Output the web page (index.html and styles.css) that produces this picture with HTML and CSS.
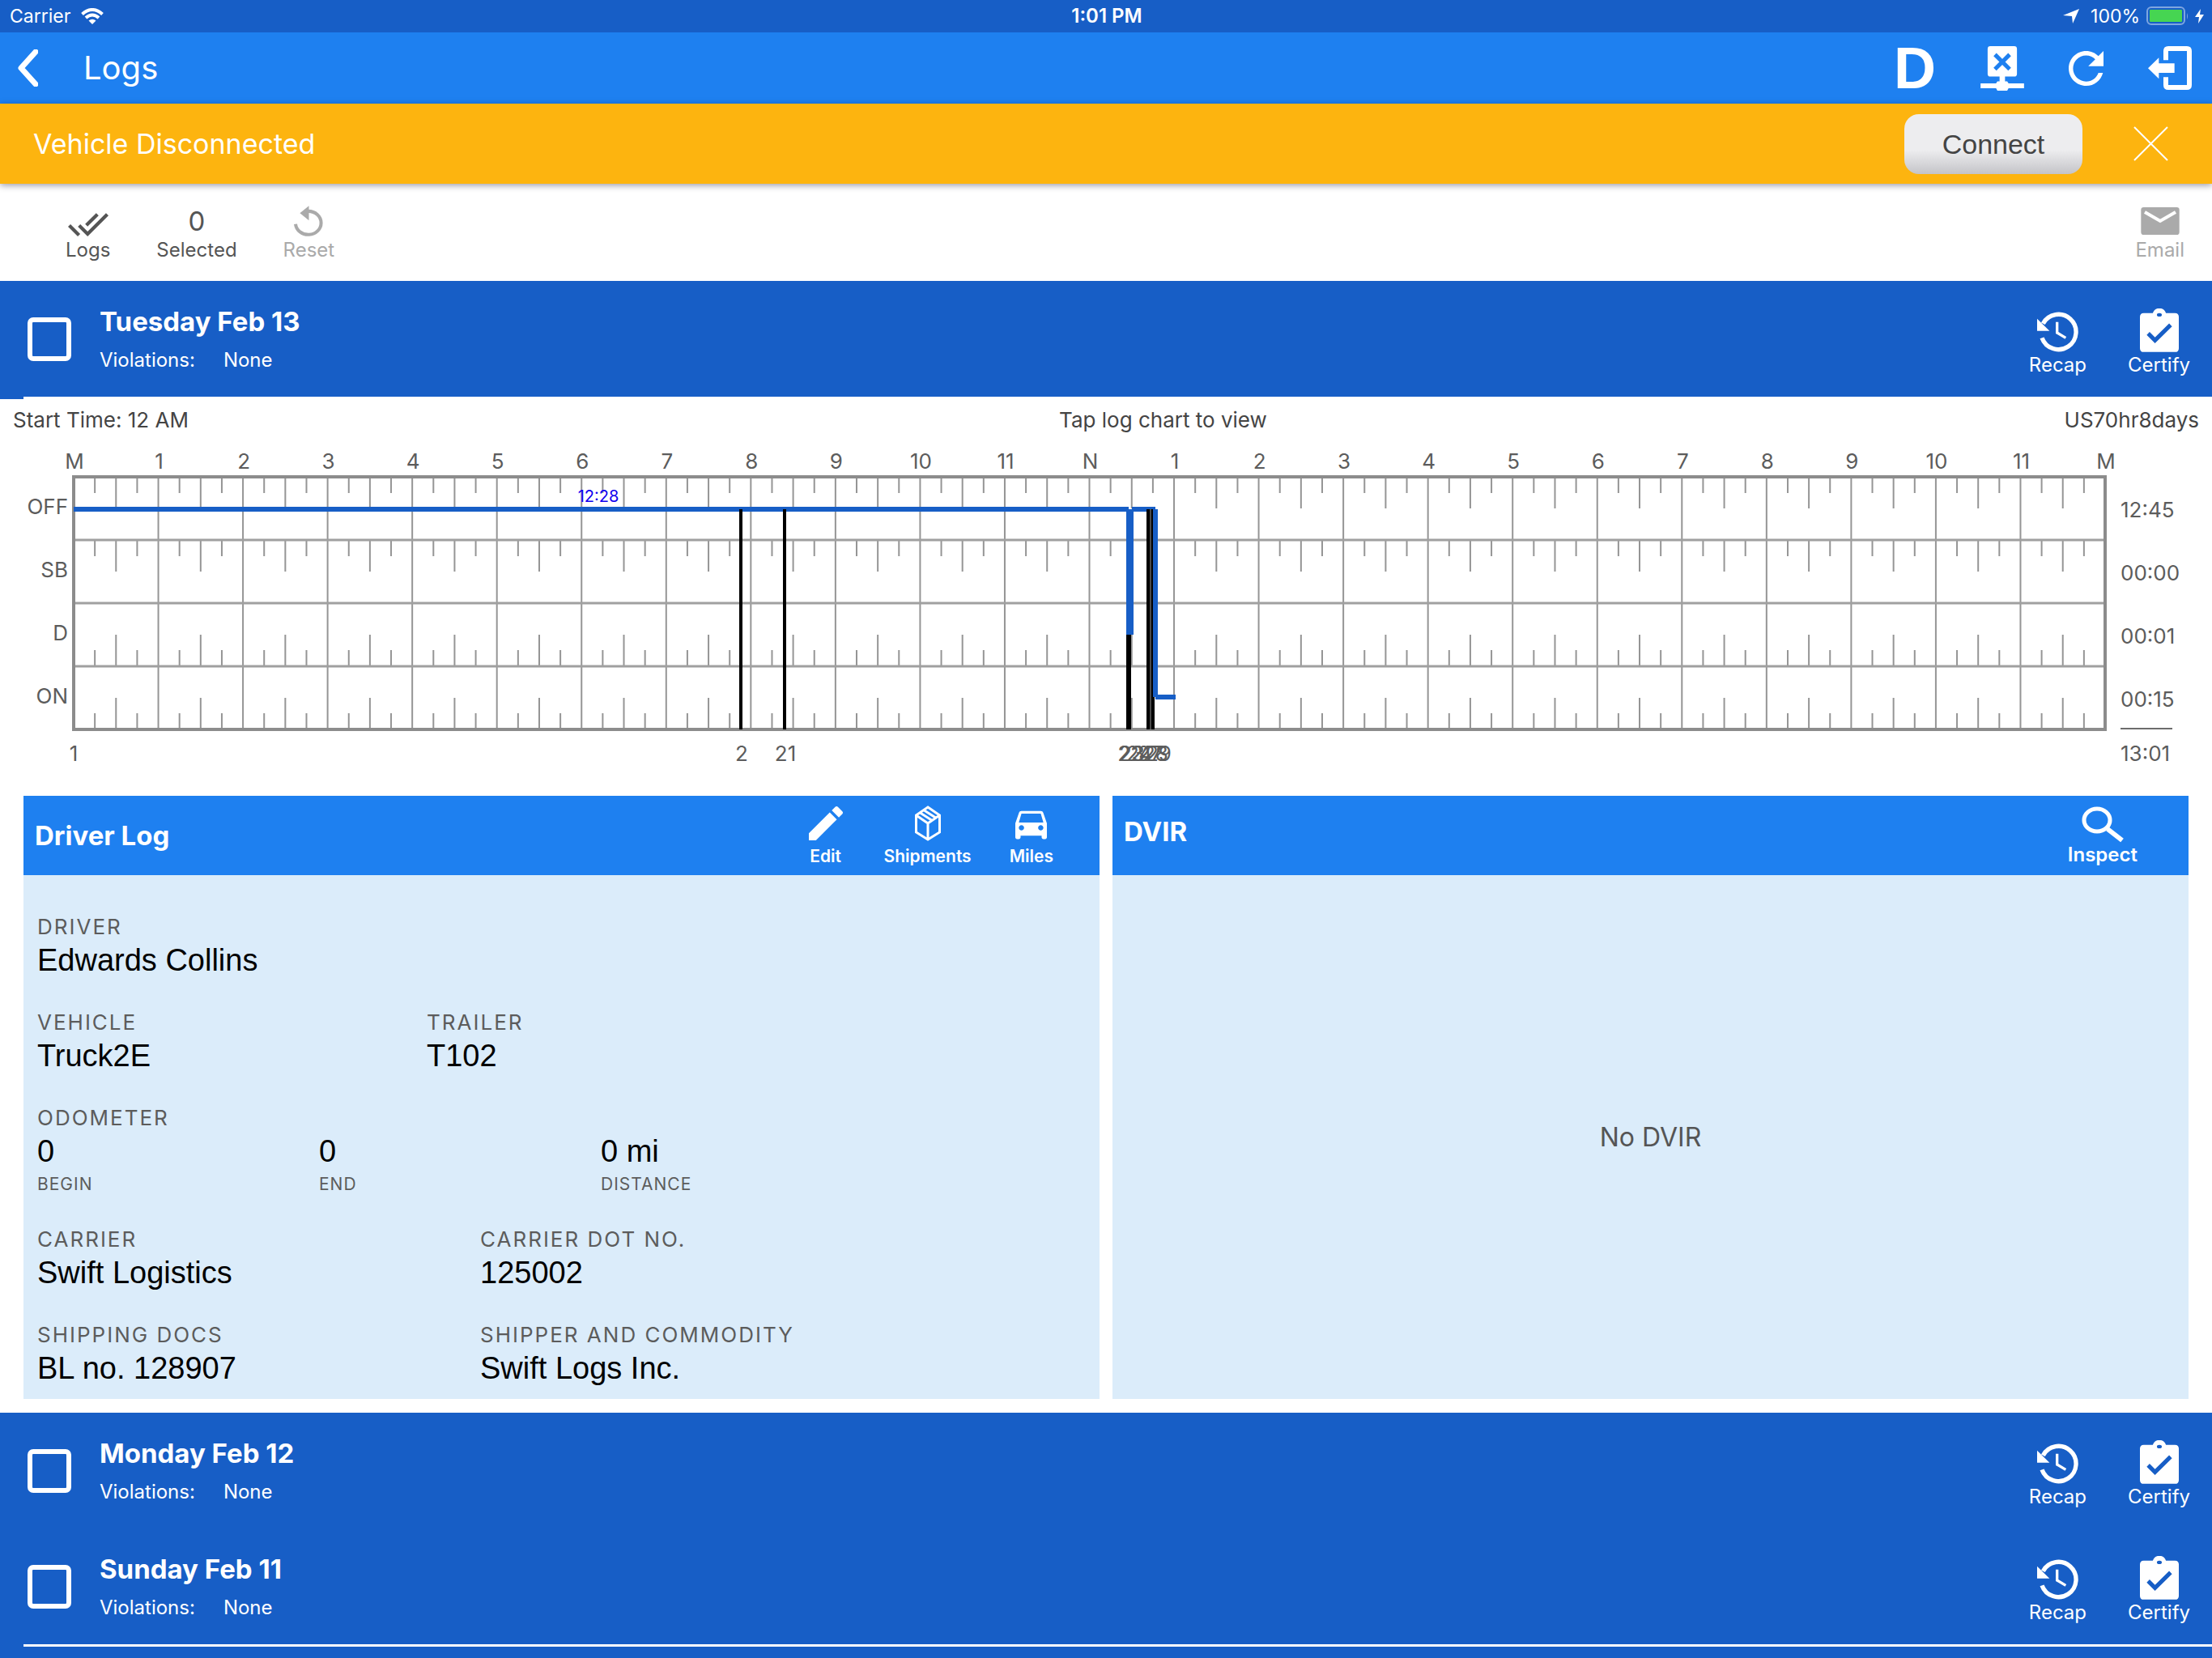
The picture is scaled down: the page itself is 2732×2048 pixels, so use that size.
FILE: index.html
```html
<!DOCTYPE html>
<html lang="en">
<head>
    <meta charset="utf-8">
    <meta name="viewport" content="width=device-width, initial-scale=1">
    <title>Logs</title>
    <link rel="stylesheet" href="styles.css">
</head>
<body>
    <!-- Shared icons -->
    <svg class="sprite" aria-hidden="true">
        <symbol id="icon-recap" viewBox="0 0 153 146">
            <path d="M22 42A65 65 0 1 1 18 95" fill="none" stroke="currentColor" stroke-width="16"/>
            <path d="M0 24L46 69H0z" fill="currentColor"/>
            <path d="M74 36V76L106 95" fill="none" stroke="currentColor" stroke-width="10"/>
        </symbol>
        <symbol id="icon-certify" viewBox="0 0 142 159">
            <path d="M14 17H47A25 25 0 0 1 95 17H128Q142 17 142 31V145Q142 159 128 159H14Q0 159 0 145V31Q0 17 14 17z" fill="currentColor"/>
            <ellipse cx="71" cy="23" rx="9" ry="6" fill="#175ec6"/>
            <path d="M30 91L55 116L112 60" fill="none" stroke="#175ec6" stroke-width="15"/>
        </symbol>
    </svg>

    <div class="status-bar">
        <div class="status-left">
            <span>Carrier</span>
            <svg width="28" height="20" viewBox="0 0 28 20" fill="none" stroke="#fff" stroke-width="4">
                <path d="M1.500 7.500Q14-3.500 26.500 7.500"/>
                <path d="M6 12Q14 5 22 12"/>
                <path d="M14 20L9.500 15.500Q14 12 18.500 15.500z" fill="#fff" stroke="none"/>
            </svg>
        </div>
        <strong class="status-time">1:01 PM</strong>
        <div class="status-right">
            <svg width="20" height="18" viewBox="0 0 20 18"><path d="M20 0L12 18L11 9L0 8z" fill="#fff"/></svg>
            <span class="battery-text">100%</span>
            <svg width="52" height="24" viewBox="0 0 52 24">
                <rect x="1" y="1" width="46" height="21" rx="5" fill="none" stroke="#7ea6e0" stroke-width="2"/>
                <rect x="4" y="4" width="40" height="15" rx="1" fill="#46d552"/>
                <path d="M50 8Q52 12 50 16z" fill="#7ea6e0"/>
            </svg>
            <svg width="11" height="18" viewBox="0 0 11 18"><path d="M7 0L0 10H5L4 18L11 7H6z" fill="#fff"/></svg>
        </div>
    </div>

    <header class="nav-bar">
        <button class="icon-button" type="button" aria-label="Back">
            <svg width="26" height="46" viewBox="0 0 26 46"><path d="M23 3L5 23L23 43" fill="none" stroke="#fff" stroke-width="7" stroke-linecap="round" stroke-linejoin="round"/></svg>
        </button>
        <h1>Logs</h1>
        <div class="nav-actions">
            <button class="icon-button duty-button" type="button" aria-label="Duty status D">D</button>
            <button class="icon-button" type="button" aria-label="Device disconnected">
                <svg width="54" height="55" viewBox="0 0 160 164">
                    <path d="M36 0H124Q134 0 134 10V102Q134 112 124 112H90V130H98L103 137H160V155H103L98 164H62L57 155H0V137H57L62 130H70V112H36Q26 112 26 102V10Q26 0 36 0z" fill="#fff"/>
                    <path d="M53 31L107 85M107 31L53 85" stroke="#1e80f0" stroke-width="15"/>
                </svg>
            </button>
            <button class="icon-button" type="button" aria-label="Refresh">
                <svg width="43" height="43" viewBox="4 4 16 16"><path d="M17.650 6.350C16.200 4.900 14.210 4 12 4c-4.420 0-7.990 3.580-7.990 8s3.570 8 7.990 8c3.730 0 6.840-2.550 7.730-6h-2.080c-.82 2.330-3.040 4-5.650 4-3.310 0-6-2.690-6-6s2.690-6 6-6c1.660 0 3.140.69 4.220 1.780L13 11h7V4l-2.350 2.350z" fill="#fff"/></svg>
            </button>
            <button class="icon-button" type="button" aria-label="Log out">
                <svg width="54" height="54" viewBox="0 0 162 162">
                    <path d="M66 52V18Q66 9 75 9H144Q153 9 153 18V144Q153 153 144 153H75Q66 153 66 144V115" fill="none" stroke="#fff" stroke-width="18"/>
                    <path d="M0 82L40 43V64H98V99H40V121z" fill="#fff"/>
                </svg>
            </button>
        </div>
    </header>

    <div class="banner">
        <span class="banner-text">Vehicle Disconnected</span>
        <button class="connect-button" type="button">Connect</button>
        <button class="icon-button" type="button" aria-label="Dismiss">
            <svg width="43" height="43" viewBox="0 0 43 43"><path d="M1 1L42 42M42 1L1 42" stroke="#fff" stroke-width="2"/></svg>
        </button>
    </div>

    <div class="toolbar">
        <button class="tool" type="button">
            <span class="tool-icon"><svg width="50" height="37" viewBox="0.410 1.800 23.250 17.200"><path d="M18 7l-1.410-1.410-6.340 6.340 1.410 1.410L18 7zm4.240-1.410L11.660 16.170 7.480 12l-1.410 1.410L11.660 19l12-12-1.420-1.410zM.41 13.410L6 19l1.410-1.410L1.830 12 .41 13.410z" fill="#555"/></svg></span>
            Logs
        </button>
        <div class="tool">
            <span class="tool-icon">0</span>
            Selected
        </div>
        <button class="tool" type="button" disabled>
            <span class="tool-icon"><svg width="36" height="38" viewBox="0 0 107 112">
                <path d="M53 20A47 43 0 1 1 6 67" fill="none" stroke="#aaa" stroke-width="12"/>
                <path d="M55 0V54L22 27z" fill="#aaa"/>
            </svg></span>
            Reset
        </button>
        <button class="tool tool-email" type="button" disabled>
            <span class="tool-icon"><svg width="48" height="34" viewBox="0 0 142 102">
                <rect width="142" height="102" rx="10" fill="#aaa"/>
                <path d="M14 18L71 51L128 18" fill="none" stroke="#fff" stroke-width="12"/>
            </svg></span>
            Email
        </button>
    </div>

    <section class="log-day">
        <input class="log-check" type="checkbox" id="day-13">
        <label class="log-label" for="day-13">
            <span class="log-date">Tuesday Feb 13</span>
            <span class="log-violations"><span>Violations:</span><span>None</span></span>
        </label>
        <button class="log-action" type="button"><svg width="51" height="50"><use href="#icon-recap"/></svg>Recap</button>
        <button class="log-action" type="button"><svg width="48" height="54"><use href="#icon-certify"/></svg>Certify</button>
    </section>
    <div class="divider"></div>

    <main class="log-detail">
        <div class="chart-info">
            <span>Start Time: 12 AM</span>
            <span>Tap log chart to view</span>
            <span>US70hr8days</span>
        </div>
        <svg id="chart" class="chart" viewBox="0 0 2732 438" role="img" aria-label="Duty status chart"></svg>

        <div class="cards">
            <section class="card">
                <header class="card-header">
                    <h2>Driver Log</h2>
                    <button class="card-action" type="button">
                        <svg width="42" height="44" viewBox="3 3 18 18"><path d="M3 17.250V21h3.750L17.810 9.940l-3.750-3.750L3 17.250zM20.710 7.040c.39-.39.39-1.020 0-1.410l-2.340-2.340c-.39-.39-1.020-.39-1.410 0l-1.830 1.830 3.750 3.750 1.830-1.830z" fill="#fff"/></svg>
                        Edit
                    </button>
                    <button class="card-action" type="button">
                        <svg width="34" height="44" viewBox="0 0 33 44" fill="none" stroke="#fff" stroke-width="3">
                            <path d="M16.500 2L31 12V33L16.500 42L2 33V12zM2 12L16.500 22L31 12M16.500 22V42"/>
                            <path d="M7 9L21 18M12 6L26 15"/>
                        </svg>
                        Shipments
                    </button>
                    <button class="card-action" type="button">
                        <svg width="39" height="44" viewBox="3 2 18 18"><path d="M18.920 5.010C18.720 4.420 18.160 4 17.500 4h-11c-.66 0-1.210.42-1.420 1.010L3 11v8c0 .55.45 1 1 1h1c.55 0 1-.45 1-1v-1h12v1c0 .55.45 1 1 1h1c.55 0 1-.45 1-1v-8l-2.080-5.990zM6.500 15c-.83 0-1.500-.67-1.500-1.500S5.670 12 6.500 12s1.500.67 1.500 1.500S7.330 15 6.500 15zm11 0c-.83 0-1.500-.67-1.500-1.500s.67-1.500 1.500-1.500 1.500.67 1.500 1.500-.67 1.500-1.500 1.500zM5 10.500l1.500-5h11l1.500 5H5z" fill="#fff"/></svg>
                        Miles
                    </button>
                </header>
                <div class="card-body">
                    <dl class="fields">
                        <div><dt>DRIVER</dt><dd>Edwards Collins</dd></div>
                    </dl>
                    <dl class="fields fields-vehicle">
                        <div><dt>VEHICLE</dt><dd>Truck2E</dd></div>
                        <div><dt>TRAILER</dt><dd>T102</dd></div>
                    </dl>
                    <div>
                        <h3>ODOMETER</h3>
                        <dl class="fields fields-odometer">
                            <div><dt>BEGIN</dt><dd>0</dd></div>
                            <div><dt>END</dt><dd>0</dd></div>
                            <div><dt>DISTANCE</dt><dd>0 mi</dd></div>
                        </dl>
                    </div>
                    <dl class="fields fields-carrier">
                        <div><dt>CARRIER</dt><dd>Swift Logistics</dd></div>
                        <div><dt>CARRIER DOT NO.</dt><dd>125002</dd></div>
                    </dl>
                    <dl class="fields fields-carrier">
                        <div><dt>SHIPPING DOCS</dt><dd>BL no. 128907</dd></div>
                        <div><dt>SHIPPER AND COMMODITY</dt><dd>Swift Logs Inc.</dd></div>
                    </dl>
                </div>
            </section>

            <section class="card">
                <header class="card-header card-header-dvir">
                    <h2>DVIR</h2>
                    <button class="card-action inspect-button" type="button">
                        <svg width="52" height="45" viewBox="0 0 52 45" fill="none" stroke="#fff">
                            <ellipse cx="19" cy="17" rx="16" ry="14" stroke-width="5"/>
                            <path d="M32 28L50 42" stroke-width="6"/>
                        </svg>
                        Inspect
                    </button>
                </header>
                <p class="card-empty">No DVIR</p>
            </section>
        </div>
    </main>

    <section class="log-day">
        <input class="log-check" type="checkbox" id="day-12">
        <label class="log-label" for="day-12">
            <span class="log-date">Monday Feb 12</span>
            <span class="log-violations"><span>Violations:</span><span>None</span></span>
        </label>
        <button class="log-action" type="button"><svg width="51" height="50"><use href="#icon-recap"/></svg>Recap</button>
        <button class="log-action" type="button"><svg width="48" height="54"><use href="#icon-certify"/></svg>Certify</button>
    </section>

    <section class="log-day">
        <input class="log-check" type="checkbox" id="day-11">
        <label class="log-label" for="day-11">
            <span class="log-date">Sunday Feb 11</span>
            <span class="log-violations"><span>Violations:</span><span>None</span></span>
        </label>
        <button class="log-action" type="button"><svg width="51" height="50"><use href="#icon-recap"/></svg>Recap</button>
        <button class="log-action" type="button"><svg width="48" height="54"><use href="#icon-certify"/></svg>Certify</button>
    </section>
    <div class="divider"></div>

    <script src="chart.js"></script>
</body>
</html>
```
FILE: styles.css
```css
* { box-sizing: border-box; }
body { margin: 0; min-height: 100vh; font-family: Inter, "Liberation Sans", sans-serif; font-size: 24px; line-height: 28px; color: #fff; background: #175ec6; }
h1, h2, h3, p, dl, dd { margin: 0; }
button { margin: 0; padding: 0; border: none; background: none; color: inherit; font: inherit; cursor: pointer; }
button:disabled { cursor: default; }
svg { display: block; }
.sprite { position: absolute; width: 0; height: 0; }

/* Status bar */
.status-bar { display: grid; grid-template-columns: 1fr auto 1fr; align-items: center; height: 40px; padding: 0 10px 0 12px; font-size: 23px; }
.status-left { display: flex; align-items: center; gap: 13px; }
.status-time { font-size: 24px; font-weight: 600; }
.status-right { display: flex; align-items: center; justify-content: flex-end; gap: 8px; }
.battery-text { padding-left: 6px; }

/* Navigation */
.nav-bar { display: flex; align-items: center; height: 88px; padding: 0 25px 0 21px; background: #1e80f0; }
.nav-bar h1 { margin-left: 56px; font-size: 40px; line-height: 48px; font-weight: 400; }
.nav-actions { display: flex; align-items: center; gap: 55px; margin-left: auto; }
.icon-button { display: flex; align-items: center; justify-content: center; }
.duty-button { font-family: "Liberation Sans", Arial, sans-serif; font-size: 72px; line-height: 72px; font-weight: 700; }

/* Disconnected banner */
.banner { position: relative; display: flex; align-items: center; height: 99px; padding: 0 54px 0 41px; background: #fdb40f; box-shadow: 0 2px 8px rgba(0, 0, 40, 0.4); }
.banner-text { flex: 1; font-size: 34px; line-height: 44px; }
.connect-button { width: 220px; height: 74px; margin-right: 63px; border-radius: 18px; background: linear-gradient(#ededef 60%, #c4c4c8); color: #444; font-family: "Liberation Sans", Arial, sans-serif; font-size: 34px; }

/* Toolbar */
.toolbar { display: flex; gap: 57px; height: 120px; padding: 24px 34px 0 81px; background: #fff; }
.tool { display: flex; flex-direction: column; align-items: center; color: #555; }
.tool:disabled { color: #aaa; }
.tool-icon { display: flex; align-items: center; justify-content: center; height: 44px; font-size: 33px; }
.tool-email { margin-left: auto; }

/* Day rows */
.log-day { display: flex; align-items: center; height: 143px; padding: 0 27px 0 34px; background: #175ec6; }
.log-check { appearance: none; width: 54px; height: 54px; margin: 0; border: 6px solid #fff; border-radius: 7px; }
.log-check:checked { background: #fff; }
.log-label { flex: 1; margin-left: 35px; }
.log-date { display: block; margin-bottom: 15px; font-size: 33px; line-height: 38px; font-weight: 700; }
.log-violations { display: flex; gap: 35px; }
.log-action { display: flex; flex-direction: column; align-items: center; justify-content: flex-end; gap: 2px; height: 84px; margin: 8px 0 0 51px; }
.divider { height: 3px; border-left: 29px solid #175ec6; background: #fff; }

/* Chart */
.log-detail { padding-bottom: 17px; background: #fff; }
.chart-info { display: grid; grid-template-columns: 51fr 49fr auto; padding: 9px 16px; color: #444; font-size: 26px; line-height: 34px; }
.chart { width: 100%; cursor: pointer; }
.chart text { fill: #5c5c5c; font-size: 26px; text-anchor: middle; }
.chart .status-label { text-anchor: end; }
.chart .total { text-anchor: start; }
.chart .duration { fill: #1000ee; font-size: 20px; }
.chart .tick, .chart .hour { stroke: #959595; stroke-width: 2; }
.chart .row { stroke: #a0a0a0; stroke-width: 3; }
.chart .frame { fill: none; stroke: #8c8c8c; stroke-width: 4; }
.chart .event { stroke: #000; stroke-width: 4; }
.chart .event-gap { stroke: #4a4a4a; stroke-width: 6; }
.chart .duty { fill: none; stroke: #175ec6; stroke-width: 6; }
.chart .sum { stroke: #6c6c6c; stroke-width: 2; }

/* Cards */
.cards { display: grid; grid-template-columns: 1fr 1fr; gap: 16px; padding: 0 29px; }
.card { display: flex; flex-direction: column; background: #dbecfa; }
.card-header { display: flex; align-items: center; gap: 47px; height: 98px; padding: 0 57px 0 14px; background: #1e80f0; }
.card-header h2 { flex: 1; font-size: 33px; line-height: 40px; font-weight: 700; }
.card-action { display: flex; flex-direction: column; align-items: center; gap: 7px; min-width: 50px; font-size: 21px; line-height: 24px; font-weight: 600; }
.card-header-dvir { padding-right: 63px; }
.card-header-dvir h2 { padding-bottom: 10px; }
.inspect-button { gap: 2px; font-size: 24px; line-height: 26px; }
.card-body { display: flex; flex-direction: column; gap: 40px; padding: 49px 17px 16px; }
.card-empty { margin: auto; color: #555; font-size: 32px; line-height: 40px; }

/* Fields */
.fields { display: grid; }
.fields-vehicle { grid-template-columns: 481fr 814fr; }
.fields-odometer { grid-template-columns: 348fr 348fr 599fr; }
.fields-carrier { grid-template-columns: 547fr 748fr; }
dt, h3 { margin: 0 0 4px; color: #5c5c5c; font-size: 26px; line-height: 30px; font-weight: 400; letter-spacing: 2px; }
dd { color: #000; font-family: "Liberation Sans", Arial, sans-serif; font-size: 38px; line-height: 44px; }
.fields-odometer div { display: flex; flex-direction: column-reverse; }
.fields-odometer dt { margin: 6px 0 0; font-size: 21px; line-height: 26px; letter-spacing: 1px; }
```
FILE: chart.js
```js
const chart = document.getElementById('chart');
const LEFT = 91, RIGHT = 2600, TOP = 44, ROW = 78;
const BOTTOM = TOP + ROW * 4;
const HOUR = (RIGHT - LEFT) / 24;

function add(name, attrs, text) {
    const el = document.createElementNS('http://www.w3.org/2000/svg', name);
    for (const key in attrs) el.setAttribute(key, attrs[key]);
    if (text !== undefined) el.textContent = text;
    chart.appendChild(el);
}

function line(cls, x1, y1, x2, y2) {
    add('line', { class: cls, x1, y1, x2, y2 });
}

// Hour lines and labels
const hours = ['M', 1, 2, 3, 4, 5, 6, 7, 8, 9, 10, 11, 'N', 1, 2, 3, 4, 5, 6, 7, 8, 9, 10, 11, 'M'];
hours.forEach((label, i) => {
    const x = LEFT + i * HOUR;
    add('text', { x: x + 1, y: 34 }, label);
    if (i > 0 && i < 24) line('hour', x, TOP, x, BOTTOM);
});

// Quarter hour ticks: top two rows hang down, bottom two stand up
for (let q = 1; q < 96; q++) {
    if (q % 4 === 0) continue;
    const x = LEFT + q * HOUR / 4;
    const len = q % 2 === 0 ? 39 : 20;
    for (let r = 0; r < 4; r++) {
        const y = TOP + ROW * (r < 2 ? r : r + 1);
        line('tick', x, y, x, r < 2 ? y + len : y - len);
    }
}

for (let r = 1; r < 4; r++) line('row', LEFT, TOP + r * ROW, RIGHT, TOP + r * ROW);
add('rect', { class: 'frame', x: LEFT, y: TOP, width: RIGHT - LEFT, height: ROW * 4 });

// Row names and totals
['OFF', 'SB', 'D', 'ON'].forEach((label, r) => {
    add('text', { class: 'status-label', x: 84, y: 90 + r * ROW }, label);
});
['12:45', '00:00', '00:01', '00:15'].forEach((label, r) => {
    add('text', { class: 'total', x: 2619, y: 94 + r * ROW }, label);
});
line('sum', 2619, BOTTOM - 1, 2683, BOTTOM - 1);
add('text', { class: 'total', x: 2619, y: 395 }, '13:01');

// Duty status and events
const OFF = 84, DRIVE = 239, ON = 316;
add('path', { class: 'duty', d: `M${LEFT} ${OFF}H1394M1398 ${OFF}H1427` });
line('event-gap', 1420, OFF, 1420, BOTTOM);
[915, 969, 1393, 1395, 1418, 1424].forEach(x => line('event', x, OFF, x, BOTTOM));
add('path', { class: 'duty', d: `M1394 ${OFF}V${DRIVE}M1397 ${OFF}V${DRIVE}M1427 ${OFF}V${ON}` });
add('path', { class: 'duty', d: `M1427 ${ON}H1452` });
add('text', { class: 'duration', x: 739, y: 75 }, '12:28');

[[91, 1], [916, 2], [970, 21], [1396, 22], [1398, 23], [1407, 24], [1420, 27], [1427, 28], [1431, 29]].forEach(([x, label]) => {
    add('text', { x, y: 395 }, label);
});
```
